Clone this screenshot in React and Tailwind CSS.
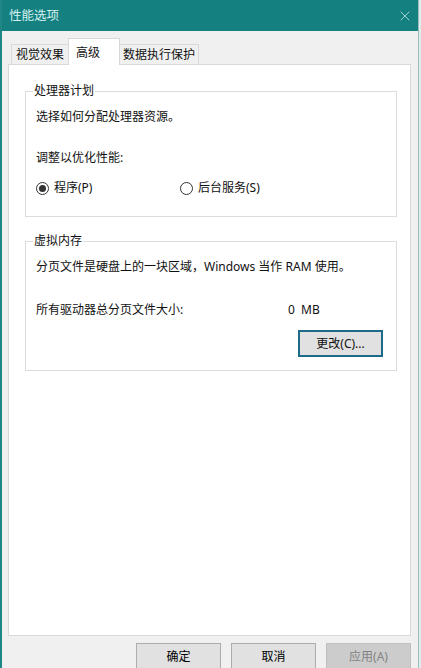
import { X } from 'lucide-react'

const FONT = { fontFamily: '"Noto Sans", "Noto Sans CJK SC", sans-serif' }

function Radio({ checked, label }) {
  return (
    <label className="flex items-center gap-[5px]">
      <span className="w-[13px] h-[13px] rounded-full border border-[#333] bg-white flex items-center justify-center">
        {checked && <span className="w-[7px] h-[7px] rounded-full bg-[#333]" />}
      </span>
      <span>{label}</span>
    </label>
  )
}

function Btn({ children, focused, disabled }) {
  return (
    <button
      className={`h-[27px] w-[85px] text-[12px] leading-none ${
        focused ? 'border-2 border-[#1d6a8a] bg-[#e1e1e1]' :
        disabled ? 'border border-[#bfbfbf] bg-[#cccccc] text-[#838383]' :
        'border border-[#adadad] bg-[#e1e1e1] text-black'
      }`}
    >
      {children}
    </button>
  )
}

export default function App() {
  return (
    <div className="w-[421px] h-[668px] overflow-hidden bg-[#dceeee] text-[12px] leading-[16px] text-[#111]" style={FONT}>
      <div className="w-[419px] h-[668px] border-l-2 border-r border-l-[#1f8585] border-r-[#9fbcbc] bg-[#f0f0f0] flex flex-col">
        {/* Title bar */}
        <div className="h-[31px] bg-[#158080] flex items-center justify-between pl-[7px] pr-[5px] shrink-0">
          <span className="text-[12.5px] text-[#d4f1f1]">性能选项</span>
          <X size={16} strokeWidth={1.1} className="text-[#d4f1f1]" />
        </div>

        <div className="pl-[6px] pr-[7px] pt-[7px] flex flex-col">
          {/* Tabs */}
          <div className="flex items-end pl-[3px] relative z-10">
            <div className="h-[20px] w-[58px] border border-b-0 border-[#d9d9d9] bg-[#f0f0f0] flex items-center justify-center">视觉效果</div>
            <div className="h-[27px] w-[52px] -mx-[1px] mb-[-1px] border border-b-0 border-[#d9d9d9] bg-white flex items-start pt-[6px] pl-[7px]">高级</div>
            <div className="h-[20px] w-[80px] border border-b-0 border-[#d9d9d9] bg-[#f0f0f0] flex items-center justify-center">数据执行保护</div>
          </div>

          {/* Panel */}
          <div className="h-[572px] border border-[#d9d9d9] bg-white pl-[16px] pr-[13px] pt-[18px]">
            <fieldset className="border border-[#dcdcdc] px-[10px] pb-[20px]">
              <legend className="ml-[-3px] px-[1px]">处理器计划</legend>
              <p className="mt-[10px]">选择如何分配处理器资源。</p>
              <p className="mt-[25px]">调整以优化性能:</p>
              <div className="mt-[14px] flex">
                <div className="w-[144px]"><Radio checked label="程序(P)" /></div>
                <Radio label="后台服务(S)" />
              </div>
            </fieldset>

            <fieldset className="mt-[16px] border border-[#dcdcdc] px-[10px] pb-[13px]">
              <legend className="ml-[-3px] px-[1px]">虚拟内存</legend>
              <p className="mt-[10px]">分页文件是硬盘上的一块区域，Windows 当作 RAM 使用。</p>
              <div className="mt-[27px] flex">
                <span className="w-[252px]">所有驱动器总分页文件大小:</span>
                <span>0&nbsp;&nbsp;MB</span>
              </div>
              <div className="mt-[12px] flex justify-end pr-[3px]">
                <Btn focused>更改(C)...</Btn>
              </div>
            </fieldset>
          </div>

          {/* Footer buttons */}
          <div className="mt-[7px] flex justify-end gap-[10px] pr-[0px]">
            <Btn>确定</Btn>
            <Btn>取消</Btn>
            <Btn disabled>应用(A)</Btn>
          </div>
        </div>
      </div>
    </div>
  )
}
